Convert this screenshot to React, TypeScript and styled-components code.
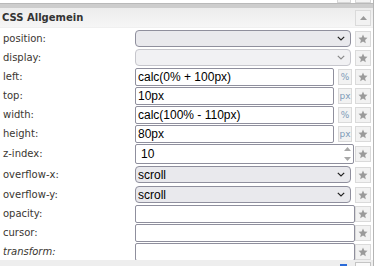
import styled, { createGlobalStyle } from "styled-components";

const GlobalStyle = createGlobalStyle`
  body {
    margin: 0;
    background: #fff;
    font-family: "DejaVu Sans", Verdana, sans-serif;
  }
`;

const Panel = styled.div`
  width: 373px;
  height: 266px;
  border-right: 1px solid #b4b4b4;
  overflow: hidden;
  position: relative;
`;

const Remnant = styled.div`
  height: 3px;
  display: flex;
  justify-content: flex-end;
  gap: 4px;
  padding-right: 2px;
`;

const RemnantBox = styled.div<{ $w: number }>`
  width: ${(p) => p.$w}px;
  height: 2px;
  border: 1px solid #d6d6d6;
  border-top: none;
  background: #f3f3f3;
`;

const Separator = styled.div`
  height: 4px;
  background: #cdcdcd;
  border-top: 1px solid #b9b9b9;
`;

const Header = styled.div`
  height: 19px;
  display: flex;
  align-items: center;
  justify-content: space-between;
  padding: 0 2px;
  background: linear-gradient(#ececec, #f6f6f6);
  border-bottom: 1px solid #f0f0f0;
  margin-bottom: 1px;
`;

const Title = styled.h3`
  margin: 0;
  font-size: 10px;
  font-weight: bold;
  color: #333;
`;

const SquareButton = styled.button<{ $push?: boolean }>`
  box-sizing: border-box;
  width: 16px;
  height: 16px;
  padding: 0;
  margin-left: ${(p) => (p.$push ? "auto" : "0")};
  display: flex;
  align-items: center;
  justify-content: center;
  background: #f2f2f2;
  border: 1px solid #dadada;
  color: #999;
`;

const Row = styled.div<{ $h?: number }>`
  display: flex;
  align-items: center;
  height: ${(p) => p.$h ?? 19}px;
  padding-right: 2px;
`;

const Label = styled.label<{ $italic?: boolean }>`
  width: 132px;
  padding-left: 3px;
  font-size: 10px;
  color: #3a3631;
  font-style: ${(p) => (p.$italic ? "italic" : "normal")};
  white-space: nowrap;
`;

const Field = styled.div`
  display: flex;
  align-items: center;
  gap: 4px;
`;

const TextInput = styled.input<{ $w: number }>`
  box-sizing: border-box;
  width: ${(p) => p.$w}px;
  height: 18px;
  padding: 0 2px;
  border: 1px solid #8f8f9d;
  border-radius: 2px;
  background: #fff;
  font-family: "Liberation Sans", Arial, sans-serif;
  font-size: 12px;
  color: #000;
  outline: none;
`;

const NumberInput = styled(TextInput)`
  height: 20px;
  padding-left: 5px;
`;

const SelectWrap = styled.div`
  position: relative;
  display: flex;
`;

const Select = styled.select<{ $disabled?: boolean }>`
  appearance: none;
  box-sizing: border-box;
  width: 216px;
  height: 17px;
  padding: 0 2px;
  border: 1px solid ${(p) => (p.$disabled ? "#c6c6cc" : "#8f8f9d")};
  border-radius: 4px;
  background: ${(p) => (p.$disabled ? "#f1f1f3" : "#e9e9ed")};
  font-family: "Liberation Sans", Arial, sans-serif;
  font-size: 12px;
  color: #000;
  outline: none;
`;

const Chevron = styled.svg`
  position: absolute;
  right: 6px;
  top: 6px;
  pointer-events: none;
`;

const Unit = styled.span`
  box-sizing: border-box;
  width: 14px;
  height: 16px;
  display: flex;
  align-items: center;
  justify-content: center;
  background: #f2f2f2;
  border: 1px solid #dadada;
  font-size: 9px;
  color: #7d9bb8;
`;

const NumberWrap = styled.div`
  position: relative;
  display: flex;
`;

const Spinner = styled.div`
  position: absolute;
  right: 2px;
  top: 3px;
  bottom: 3px;
  width: 9px;
  display: flex;
  flex-direction: column;
  align-items: center;
  justify-content: space-between;
`;

const Star = () => (
  <svg width="10" height="10" viewBox="0 0 10 10">
    <path
      d="M5 0.6 L6.3 3.5 L9.5 3.8 L7.1 5.9 L7.8 9.2 L5 7.5 L2.2 9.2 L2.9 5.9 L0.5 3.8 L3.7 3.5 Z"
      fill="#9a9a9a"
    />
  </svg>
);

const ChevronIcon = ({ light }: { light?: boolean }) => (
  <Chevron width="8" height="5" viewBox="0 0 8 5">
    <path
      d="M0.8 0.8 L4 4 L7.2 0.8"
      fill="none"
      stroke={light ? "#8a8a8a" : "#222"}
      strokeWidth="1.2"
    />
  </Chevron>
);

type Prop =
  | { name: string; kind: "select"; value: string; disabled?: boolean; h?: number }
  | { name: string; kind: "unit"; value: string; unit: string }
  | { name: string; kind: "number"; value: string; h?: number }
  | { name: string; kind: "text"; value: string; italic?: boolean };

const props: Prop[] = [
  { name: "position", kind: "select", value: "" },
  { name: "display", kind: "select", value: "", disabled: true },
  { name: "left", kind: "unit", value: "calc(0% + 100px)", unit: "%" },
  { name: "top", kind: "unit", value: "10px", unit: "px" },
  { name: "width", kind: "unit", value: "calc(100% - 110px)", unit: "%" },
  { name: "height", kind: "unit", value: "80px", unit: "px" },
  { name: "z-index", kind: "number", value: "10", h: 21 },
  { name: "overflow-x", kind: "select", value: "scroll", h: 21 },
  { name: "overflow-y", kind: "select", value: "scroll" },
  { name: "opacity", kind: "text", value: "" },
  { name: "cursor", kind: "text", value: "" },
  { name: "transform", kind: "text", value: "", italic: true },
];

const renderField = (p: Prop) => {
  switch (p.kind) {
    case "select":
      return (
        <SelectWrap>
          <Select $disabled={p.disabled} value={p.value} onChange={() => {}}>
            <option value=""></option>
            <option value="scroll">scroll</option>
          </Select>
          <ChevronIcon light={p.disabled} />
        </SelectWrap>
      );
    case "unit":
      return (
        <>
          <TextInput $w={199} defaultValue={p.value} />
          <Unit>{p.unit}</Unit>
        </>
      );
    case "number":
      return (
        <NumberWrap>
          <NumberInput $w={219} defaultValue={p.value} />
          <Spinner>
            <svg width="7" height="4" viewBox="0 0 7 4">
              <path d="M3.5 0 L7 4 L0 4 Z" fill="#a8a8a8" />
            </svg>
            <svg width="7" height="4" viewBox="0 0 7 4">
              <path d="M0 0 L7 0 L3.5 4 Z" fill="#a8a8a8" />
            </svg>
          </Spinner>
        </NumberWrap>
      );
    default:
      return <TextInput $w={220} defaultValue={p.value} />;
  }
};

const BottomBar = styled.div`
  position: absolute;
  left: 0;
  right: 0;
  bottom: 0;
  height: 6px;
  background: #eeeeee;
  display: flex;
  justify-content: flex-end;
  align-items: flex-end;
  gap: 8px;
  padding-right: 2px;
`;

const Check = styled.div`
  width: 7px;
  height: 2px;
  background: #2a6ad8;
`;

const BottomBox = styled.div`
  width: 14px;
  height: 3px;
  border: 1px solid #c4c4c4;
  border-bottom: none;
  background: #fafafa;
`;

export default function App() {
  return (
    <>
      <GlobalStyle />
      <Panel>
        <Remnant>
          <RemnantBox $w={12} />
          <RemnantBox $w={14} />
        </Remnant>
        <Separator />
        <Header>
          <Title>CSS Allgemein</Title>
          <SquareButton>
            <svg width="7" height="4" viewBox="0 0 7 4">
              <path d="M3.5 0 L7 4 L0 4 Z" fill="#9a9a9a" />
            </svg>
          </SquareButton>
        </Header>
        {props.map((p) => (
          <Row key={p.name} $h={"h" in p ? p.h : undefined}>
            <Label $italic={"italic" in p ? p.italic : false}>{p.name}:</Label>
            <Field>{renderField(p)}</Field>
            <SquareButton $push>
              <Star />
            </SquareButton>
          </Row>
        ))}
        <BottomBar>
          <Check />
          <BottomBox />
        </BottomBar>
      </Panel>
    </>
  );
}
